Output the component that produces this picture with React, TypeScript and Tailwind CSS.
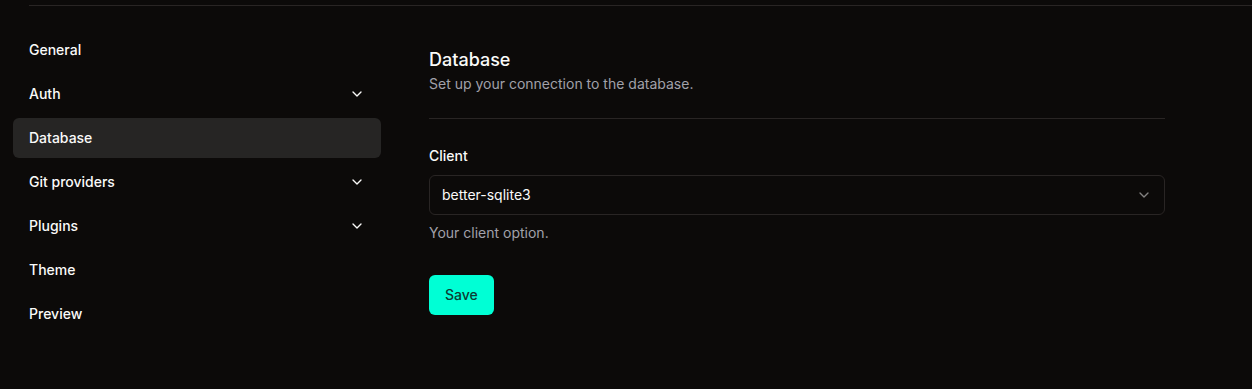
import { ChevronDown } from "lucide-react";

const items = [
  { label: "General" },
  { label: "Auth", sub: true },
  { label: "Database", active: true },
  { label: "Git providers", sub: true },
  { label: "Plugins", sub: true },
  { label: "Theme" },
  { label: "Preview" },
];

export default function App() {
  return (
    <div className="min-h-screen bg-[#0c0a09] text-[#fafaf9] font-['Inter',sans-serif] pt-[5px]">
      <div className="ml-[29px] h-px bg-[#292524]" />

      <div className="flex gap-12 pl-[13px] mt-6">
        <nav className="w-[368px] flex flex-col gap-1">
          {items.map((item) => (
            <div
              key={item.label}
              className={`flex items-center justify-between h-10 px-4 rounded-md text-sm font-medium ${
                item.active ? "bg-[#262524]" : ""
              }`}
            >
              <span>{item.label}</span>
              {item.sub && <ChevronDown size={16} strokeWidth={2} />}
            </div>
          ))}
        </nav>

        <main className="w-[736px] pt-4">
          <h3 className="text-lg leading-7 font-medium">Database</h3>
          <p className="text-sm text-[#a1a1aa]">Set up your connection to the database.</p>

          <div className="mt-6 h-px bg-[#292524]" />

          <label className="block mt-[27px] text-sm font-medium">Client</label>
          <div className="mt-[9px] flex items-center justify-between h-10 px-3 rounded-md border border-[#292524] text-sm">
            <span>better-sqlite3</span>
            <ChevronDown size={16} className="opacity-50" />
          </div>
          <p className="mt-2 text-sm text-[#a1a1aa]">Your client option.</p>

          <button className="mt-8 h-10 px-4 rounded-md bg-[#00ffd5] text-[#0c3b33] text-sm font-medium">
            Save
          </button>
        </main>
      </div>
    </div>
  );
}
